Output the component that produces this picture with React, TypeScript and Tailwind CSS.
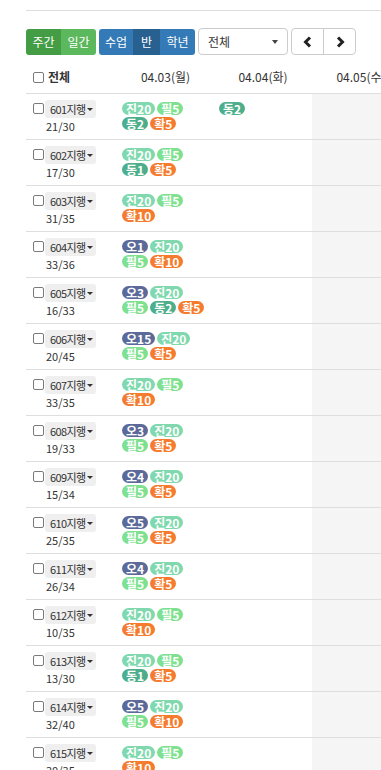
import React from 'react'

type Tag = { k: '오' | '진' | '필' | '동' | '확'; n: number }

const tagColor: Record<string, string> = {
  오: 'bg-[#5b6a99]',
  진: 'bg-[#80d9ae]',
  필: 'bg-[#7de18f]',
  동: 'bg-[#4cae8b]',
  확: 'bg-[#f57c2f]',
}

const t = (k: Tag['k'], n: number): Tag => ({ k, n })

const rows: { name: string; count: string; mon: Tag[][]; tue?: Tag[][] }[] = [
  { name: '601', count: '21/30', mon: [[t('진', 20), t('필', 5)], [t('동', 2), t('확', 5)]], tue: [[t('동', 2)]] },
  { name: '602', count: '17/30', mon: [[t('진', 20), t('필', 5)], [t('동', 1), t('확', 5)]] },
  { name: '603', count: '31/35', mon: [[t('진', 20), t('필', 5)], [t('확', 10)]] },
  { name: '604', count: '33/36', mon: [[t('오', 1), t('진', 20)], [t('필', 5), t('확', 10)]] },
  { name: '605', count: '16/33', mon: [[t('오', 3), t('진', 20)], [t('필', 5), t('동', 2), t('확', 5)]] },
  { name: '606', count: '20/45', mon: [[t('오', 15), t('진', 20)], [t('필', 5), t('확', 5)]] },
  { name: '607', count: '33/35', mon: [[t('진', 20), t('필', 5)], [t('확', 10)]] },
  { name: '608', count: '19/33', mon: [[t('오', 3), t('진', 20)], [t('필', 5), t('확', 5)]] },
  { name: '609', count: '15/34', mon: [[t('오', 4), t('진', 20)], [t('필', 5), t('확', 5)]] },
  { name: '610', count: '25/35', mon: [[t('오', 5), t('진', 20)], [t('필', 5), t('확', 5)]] },
  { name: '611', count: '26/34', mon: [[t('오', 4), t('진', 20)], [t('필', 5), t('확', 5)]] },
  { name: '612', count: '10/35', mon: [[t('진', 20), t('필', 5)], [t('확', 10)]] },
  { name: '613', count: '13/30', mon: [[t('진', 20), t('필', 5)], [t('동', 1), t('확', 5)]] },
  { name: '614', count: '32/40', mon: [[t('오', 5), t('진', 20)], [t('필', 5), t('확', 10)]] },
  { name: '615', count: '30/35', mon: [[t('진', 20), t('필', 5)], [t('확', 10)]] },
]

const Box = () => <div className="w-[11px] h-[11px] border border-[#7a7a7a] rounded-[2px] bg-white shrink-0" />

const Badges = ({ lines }: { lines?: Tag[][] }) => (
  <div className="flex flex-col gap-[2px] pt-[8px] pl-[5px]">
    {lines?.map((line, i) => (
      <div key={i} className="flex gap-[2px]">
        {line.map((b, j) => (
          <span
            key={j}
            className={`${tagColor[b.k]} h-[13px] px-[4px] rounded-full text-white font-bold text-[12px] leading-[11px] inline-flex items-center`}
          >
            {b.k}
            {b.n}
          </span>
        ))}
      </div>
    ))}
  </div>
)

const Chevron = ({ dir }: { dir: 'l' | 'r' }) => (
  <svg width="10" height="12" viewBox="0 0 10 12">
    <path
      d={dir === 'l' ? 'M7 1.5 L2.5 6 L7 10.5' : 'M3 1.5 L7.5 6 L3 10.5'}
      fill="none"
      stroke="#222"
      strokeWidth="3"
    />
  </svg>
)

export default function App() {
  return (
    <div className="min-h-screen bg-white overflow-hidden text-[#333]" style={{ fontFamily: '"Noto Sans CJK KR", "Noto Sans", sans-serif' }}>
      <div className="pl-[26px] pt-[10px]">
        <div className="border-t border-[#dedede]" />

        {/* toolbar */}
        <div className="flex items-center gap-[3px] mt-[17px] h-[27px]">
          <div className="flex h-[26px] rounded-[3px] overflow-hidden text-white text-[12px]">
            <div className="w-[35px] flex items-center justify-center bg-[#449d44]">주간</div>
            <div className="w-[35px] flex items-center justify-center bg-[#5cb85c]">일간</div>
          </div>
          <div className="flex h-[26px] rounded-[3px] overflow-hidden text-white text-[12px]">
            <div className="w-[34px] flex items-center justify-center bg-[#337ab7]">수업</div>
            <div className="w-[27px] flex items-center justify-center bg-[#286090]">반</div>
            <div className="w-[35px] flex items-center justify-center bg-[#337ab7]">학년</div>
          </div>
          <div className="w-[90px] h-[27px] border border-[#cccccc] rounded-[4px] flex items-center justify-between pl-[9px] pr-[9px] text-[12px] text-[#333]">
            <span>전체</span>
            <span className="w-0 h-0 border-l-[3px] border-r-[3px] border-t-[4px] border-l-transparent border-r-transparent border-t-[#444]" />
          </div>
          <div className="flex h-[27px] border border-[#cccccc] rounded-[4px]">
            <div className="w-[32px] flex items-center justify-center border-r border-[#cccccc]">
              <Chevron dir="l" />
            </div>
            <div className="w-[31px] flex items-center justify-center">
              <Chevron dir="r" />
            </div>
          </div>
        </div>

        {/* header */}
        <div className="flex h-[33px] mt-[6px] border-b border-[#dedede] items-center text-[12px]">
          <div className="w-[91px] shrink-0 flex items-center pl-[7px] gap-[4px]">
            <Box />
            <span className="font-bold">전체</span>
          </div>
          <div className="w-[97px] shrink-0 text-center">04.03(월)</div>
          <div className="w-[98px] shrink-0 text-center">04.04(화)</div>
          <div className="w-[98px] shrink-0 text-center whitespace-nowrap">04.05(수)</div>
        </div>

        {/* rows */}
        {rows.map((r) => (
          <div key={r.name} className="flex h-[46px] border-b border-[#dedede]">
            <div className="w-[91px] shrink-0 flex pl-[7px] pt-[6px] gap-[1px]">
              <div className="pt-[3px]">
                <Box />
              </div>
              <div className="flex flex-col">
                <div className="h-[18px] w-[51px] bg-[#efefef] rounded-[3px] flex items-center pl-[5px] text-[11px] leading-none">
                  <span className="tracking-[-0.6px] whitespace-nowrap">{r.name}지행</span>
                  <span className="ml-[1px] w-0 h-0 border-l-[3px] border-r-[3px] border-t-[3px] border-l-transparent border-r-transparent border-t-[#333]" />
                </div>
                <div className="text-[11px] leading-[12px] mt-[2px] pl-[1px]">{r.count}</div>
              </div>
            </div>
            <div className="w-[97px] shrink-0">
              <Badges lines={r.mon} />
            </div>
            <div className="w-[98px] shrink-0">
              <Badges lines={r.tue} />
            </div>
            <div className="w-[98px] shrink-0 bg-[#f5f5f5]" />
          </div>
        ))}
      </div>
    </div>
  )
}
